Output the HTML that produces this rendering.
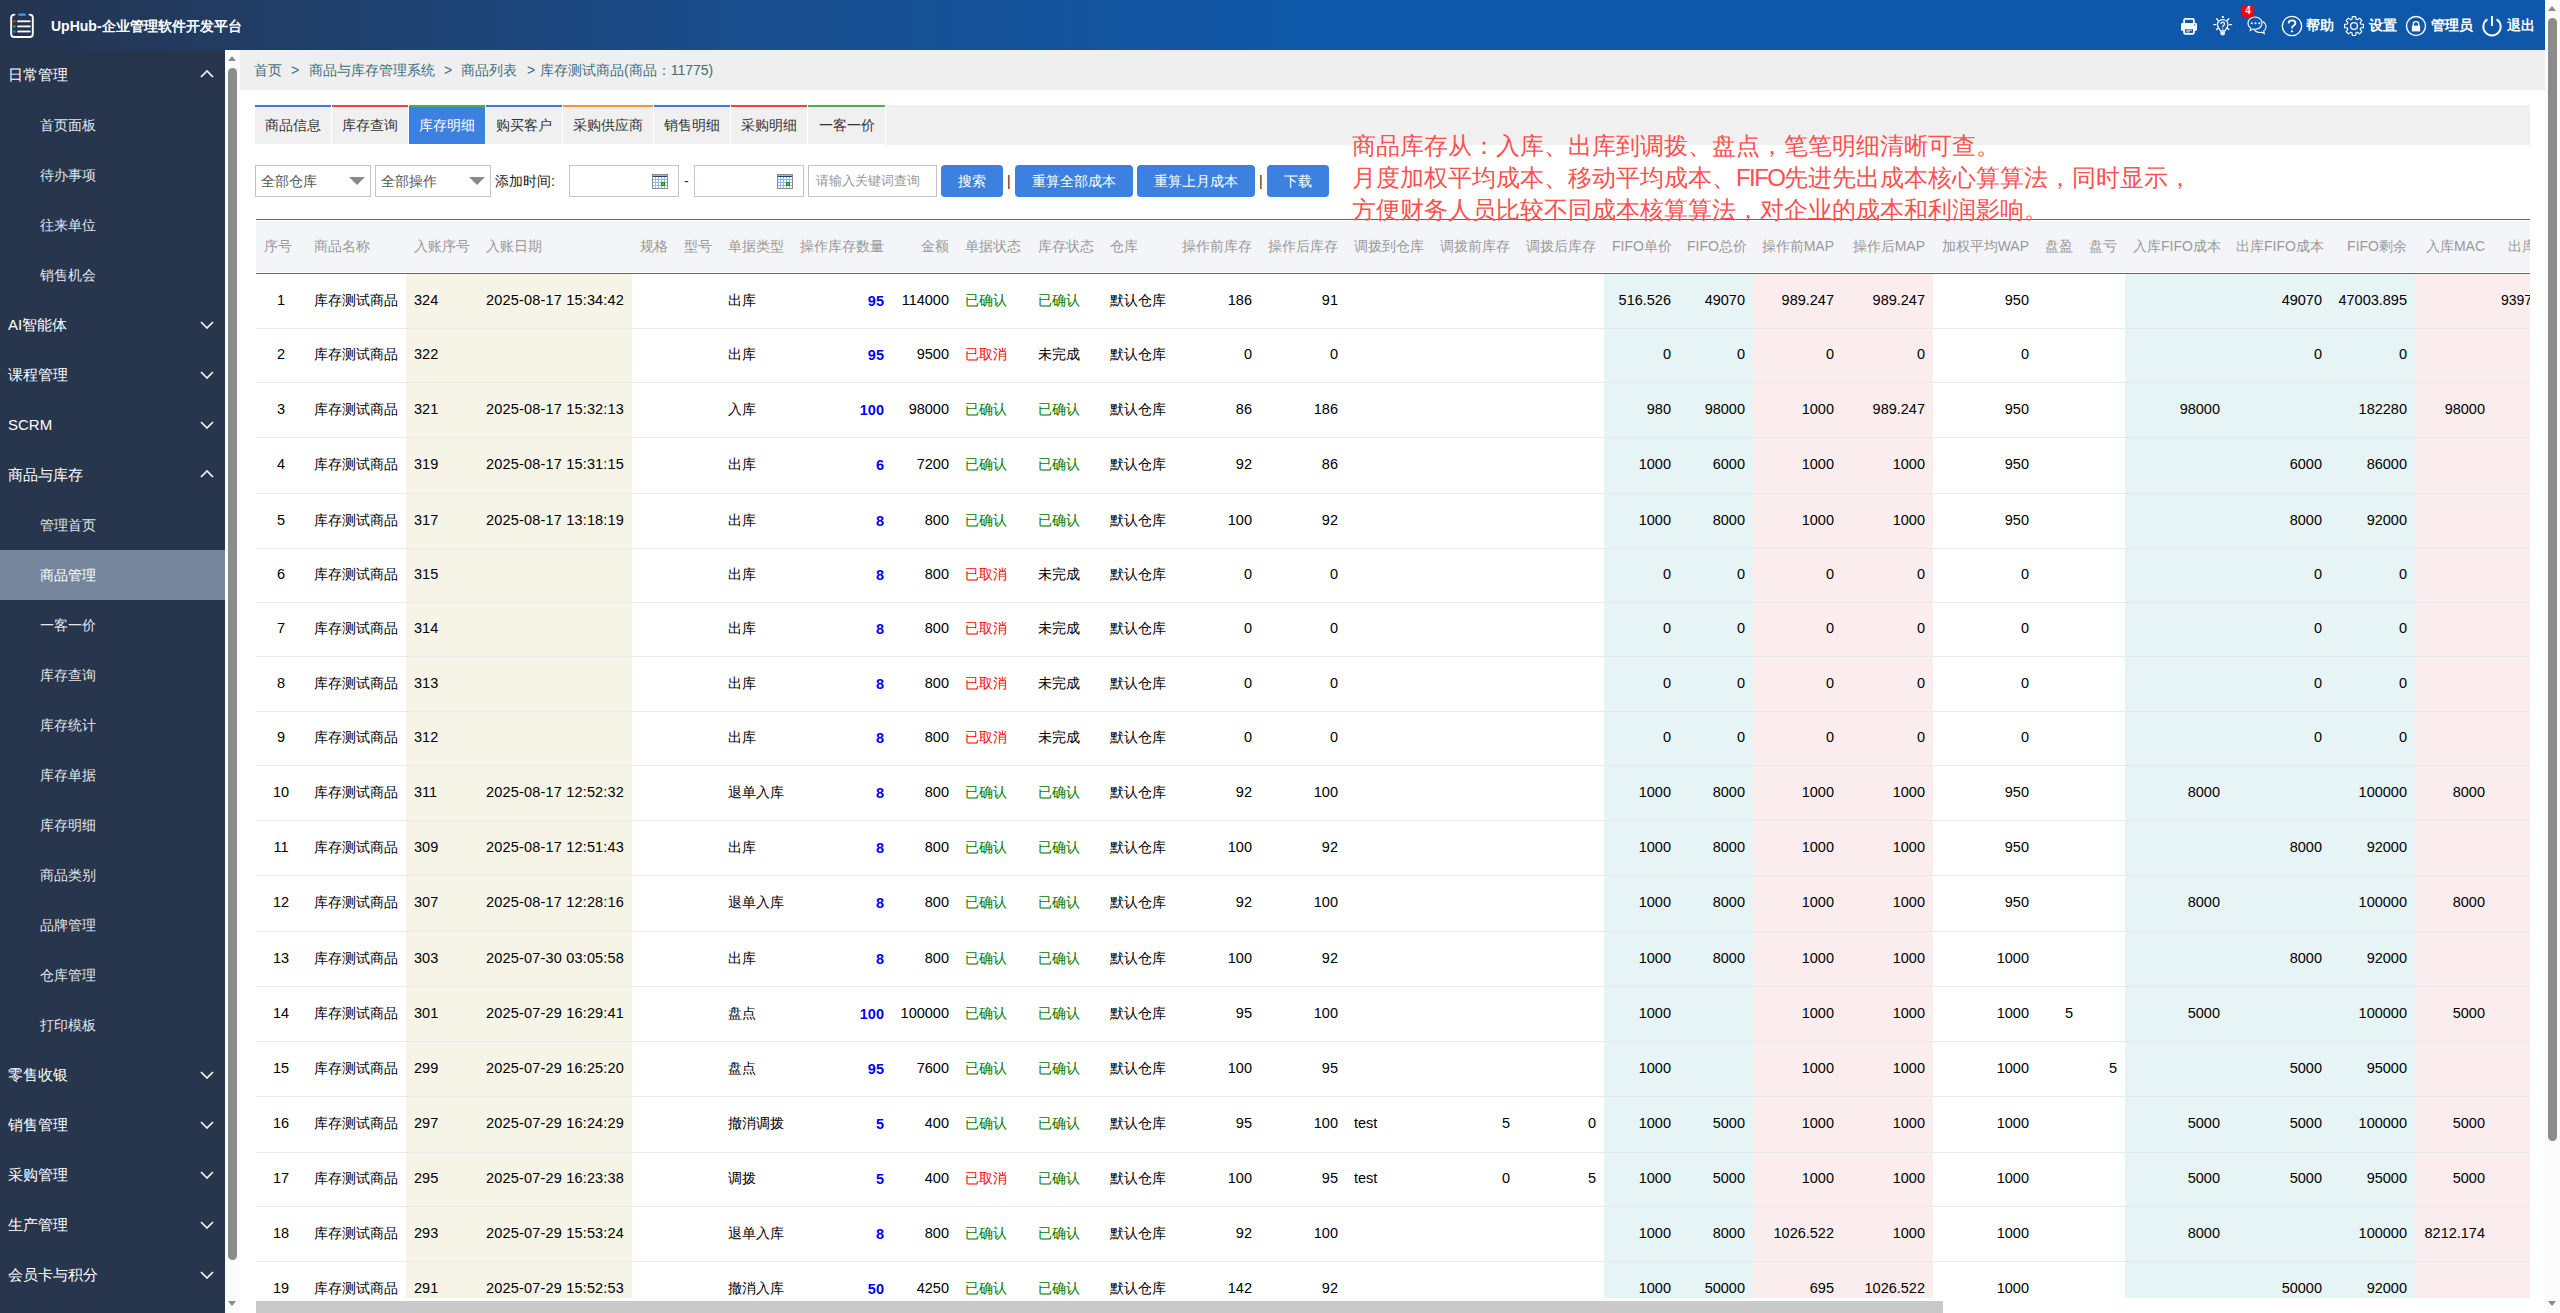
<!DOCTYPE html><html><head><meta charset="utf-8"><style>
*{box-sizing:border-box}
html,body{margin:0;padding:0;width:2560px;height:1313px;overflow:hidden;background:#fff;font-family:"Liberation Sans",sans-serif;font-size:14px;color:#000}
.a{position:absolute}
.hd{left:0;top:0;width:2545px;height:50px;background:linear-gradient(90deg,#25344f 0px,#1a4c8a 700px,#0f57a8 1300px,#0f57a8 2545px)}
.title{left:51px;top:15px;color:#fff;font-weight:bold;font-size:14px;line-height:22px;white-space:nowrap}
.sb{left:0;top:50px;width:225px;height:1263px;background:#27354d}
.mi{position:absolute;left:0;width:225px;height:50px;line-height:50px;white-space:nowrap}
.g{color:#fff;font-size:15px;padding-left:8px}
.s{color:#e3e6ea;font-size:14px;padding-left:40px}
.act{background:#76879d;color:#fff}
.chev{position:absolute;left:200px;width:14px;height:8px}
.vs{background:#fbfbfb}
.thumb{background:#8b8b8b;border-radius:5px}
.bc{left:240px;top:50px;width:2305px;height:40px;background:#efefef;color:#3a6f80;font-size:14px;line-height:40px;padding-left:14px;white-space:nowrap}
.tabbar{left:886px;top:105px;width:1644px;height:40px;background:#f0f0f0}
.tab{position:absolute;top:0;height:39px;line-height:40px;text-align:center;color:#333;font-size:14px;background:#f0f0f0;white-space:nowrap}
.tab.on{background:#3c80e0;color:#fff}
.sel{height:32px;border:1px solid #c4c4c4;background:#fff;color:#555;line-height:30px;padding-left:5px;white-space:nowrap}
.tri{position:absolute;right:5px;top:11px;width:0;height:0;border-left:8px solid transparent;border-right:8px solid transparent;border-top:8px solid #8a8a8a}
.inp{height:32px;border:1px solid #c4c4c4;background:#fff;color:#888;line-height:30px;padding-left:6px;white-space:nowrap}
.btn{height:32px;background:#3c80e0;color:#fff;border-radius:4px;text-align:center;line-height:32px;white-space:nowrap}
.red{left:1352px;color:#ff4f4f;font-size:24px;line-height:32px;white-space:nowrap}
.tbl{left:256px;top:219px;width:2274px;height:1079px;overflow:hidden}
.c{position:absolute;white-space:nowrap;overflow:hidden;padding:0 8px}
.n{font-size:14.5px}
.dt{letter-spacing:0.18px}
.th{color:#999;font-size:14px}
.num{color:#0000ff;font-weight:bold}
.ok{color:#007a00}
.no{color:#f00}

</style></head><body>
<div class="a hd"></div>
<svg class="a" style="left:10px;top:13px" width="25" height="26" viewBox="0 0 25 26">
<path d="M4.5 1.6 Q1.2 1.6 1.2 4.6 V21 Q1.2 24 4.2 24 H19.8 Q22.8 24 22.8 21 V4.6 Q22.8 1.6 19.5 1.6" fill="none" stroke="#fff" stroke-width="1.9" stroke-linecap="round"/>
<rect x="8.3" y="0.6" width="7.6" height="2.2" rx="1.1" fill="#2aa8f2"/>
<circle cx="4.4" cy="8.3" r="1.3" fill="#ff2020"/><circle cx="4.4" cy="13.4" r="1.3" fill="#18b818"/><circle cx="4.4" cy="18.5" r="1.3" fill="#1e78ff"/>
<rect x="7.3" y="7.4" width="13.2" height="1.8" fill="#fff"/><rect x="7.3" y="12.5" width="13.2" height="1.8" fill="#fff"/><rect x="7.3" y="17.6" width="13.2" height="1.8" fill="#fff"/>
</svg>
<div class="a title">UpHub-企业管理软件开发平台</div>
<svg class="a" style="left:2181px;top:17px" width="17" height="18" viewBox="0 0 17 18">
<rect x="3.1" y="1.9" width="9.8" height="5" rx="1.3" fill="none" stroke="#fff" stroke-width="1.8"/>
<rect x="0" y="6" width="16" height="7.8" rx="1.2" fill="#fff"/>
<circle cx="13.6" cy="8" r="0.8" fill="#1a5fb0"/>
<rect x="3.1" y="11" width="9.8" height="5.9" rx="1.3" fill="#0f57a8" stroke="#fff" stroke-width="1.8"/>
<rect x="5" y="12.5" width="6" height="1.2" fill="#c5d6ee"/><rect x="5" y="14.3" width="4" height="1.1" fill="#c5d6ee"/>
</svg>
<svg class="a" style="left:2213px;top:16px" width="20" height="20" viewBox="0 0 20 20">
<path d="M7.3 14.8 C6.8 13.2 4.4 11.5 4.4 8.6 C4.4 5.6 6.8 3.6 9.7 3.6 C12.6 3.6 15 5.6 15 8.6 C15 11.5 12.6 13.2 12.1 14.8 Z" fill="none" stroke="#fff" stroke-width="1.25" stroke-linejoin="round"/>
<path d="M7.9 8.1 Q7.9 6.3 9.7 6.3 Q11.5 6.3 11.5 7.9 Q11.5 9 10.3 9.6 Q9.7 10 9.7 11.3" fill="none" stroke="#dfe8f3" stroke-width="1.4"/>
<rect x="9.1" y="12.2" width="1.2" height="1.2" fill="#dfe8f3"/>
<path d="M7.4 15.2 H12 V17.6 Q12 19.6 9.7 19.6 Q7.4 19.6 7.4 17.6 Z" fill="#e6edf6"/>
<rect x="8.8" y="0" width="2" height="2" fill="#fff"/>
<path d="M3.6 2.8 L5 4.3 M15.8 2.8 L14.4 4.3 M0.8 8.6 H2.8 M16.6 8.6 H18.6 M3.6 13.6 L5 12.3 M15.8 13.6 L14.4 12.3" stroke="#fff" stroke-width="1.3" stroke-linecap="round"/>
</svg>
<svg class="a" style="left:2247px;top:16px" width="21" height="21" viewBox="0 0 21 21">
<path d="M8 1 C4 1 1 3.8 1 7.2 C1 9.3 2.1 11 3.8 12.1 L3.2 14.5 L6.3 13 C6.9 13.2 7.4 13.3 8 13.3 C12 13.3 15 10.6 15 7.2 C15 3.8 12 1 8 1 Z" fill="none" stroke="#fff" stroke-width="1.1"/>
<path d="M15.6 5.6 C17.7 6.7 19 8.6 19 10.8 C19 12.5 18.2 14 16.8 15 L17.3 17.6 L14.6 16.2 C14 16.4 13.3 16.5 12.6 16.5 C10.4 16.5 8.5 15.6 7.4 14.2" fill="none" stroke="#fff" stroke-width="1.1"/>
<circle cx="4.7" cy="7.3" r="1.05" fill="#fff"/><circle cx="8.5" cy="7.3" r="1.05" fill="#fff"/><circle cx="12.3" cy="7.3" r="1.05" fill="#fff"/>
</svg>
<div class="a" style="left:2242px;top:5px;width:12px;height:12px;background:#f00;border-radius:2px;color:#fff;font-size:10px;font-weight:bold;line-height:12px;text-align:center">4</div>
<svg class="a" style="left:2281px;top:15px" width="22" height="22" viewBox="0 0 22 22">
<circle cx="11" cy="11" r="9.7" fill="none" stroke="#fff" stroke-width="1.3"/>
<path d="M7.6 8.6 Q7.6 5.4 11 5.4 Q14.4 5.4 14.4 8.2 Q14.4 9.9 12.3 10.9 Q11 11.5 11 13.4" fill="none" stroke="#fff" stroke-width="1.8"/>
<circle cx="11" cy="16.3" r="1.1" fill="#fff"/>
</svg>
<div class="a" style="left:2306px;top:15px;color:#fff;font-weight:bold;font-size:14px;line-height:20px">帮助</div>
<svg class="a" style="left:2343px;top:15px" width="22" height="22" viewBox="0 0 22 22">
<path d="M8.95 4.31 L9.33 1.55 L12.67 1.55 L13.05 4.31 L14.29 4.82 L16.51 3.14 L18.86 5.49 L17.18 7.71 L17.69 8.95 L20.45 9.33 L20.45 12.67 L17.69 13.05 L17.18 14.29 L18.86 16.51 L16.51 18.86 L14.29 17.18 L13.05 17.69 L12.67 20.45 L9.33 20.45 L8.95 17.69 L7.71 17.18 L5.49 18.86 L3.14 16.51 L4.82 14.29 L4.31 13.05 L1.55 12.67 L1.55 9.33 L4.31 8.95 L4.82 7.71 L3.14 5.49 L5.49 3.14 L7.71 4.82 Z" fill="none" stroke="#fff" stroke-width="1.15" stroke-linejoin="round"/>
<circle cx="11" cy="11" r="3.4" fill="none" stroke="#fff" stroke-width="1.25"/>
</svg>
<div class="a" style="left:2369px;top:15px;color:#fff;font-weight:bold;font-size:14px;line-height:20px">设置</div>
<svg class="a" style="left:2405px;top:15px" width="22" height="22" viewBox="0 0 22 22">
<circle cx="11" cy="11" r="9.5" fill="none" stroke="#fff" stroke-width="1.4"/>
<path d="M8.3 11 V9 Q8.3 6.6 11 6.6 Q13.7 6.6 13.7 9 V11" fill="none" stroke="#fff" stroke-width="1.3"/>
<rect x="6.9" y="10.6" width="8.2" height="5.8" fill="#fff"/>
</svg>
<div class="a" style="left:2431px;top:15px;color:#fff;font-weight:bold;font-size:14px;line-height:20px">管理员</div>
<svg class="a" style="left:2481px;top:15px" width="22" height="22" viewBox="0 0 22 22">
<path d="M6.4 4.4 A8.7 8.7 0 1 0 15.6 4.4" fill="none" stroke="#fff" stroke-width="1.9"/>
<path d="M11 1 V11" stroke="#fff" stroke-width="1.9"/>
</svg>
<div class="a" style="left:2507px;top:15px;color:#fff;font-weight:bold;font-size:14px;line-height:20px">退出</div>
<div class="a vs" style="left:2545px;top:0;width:15px;height:1313px"></div>
<div class="a" style="left:2548px;top:6px;width:0;height:0;border-left:4.5px solid transparent;border-right:4.5px solid transparent;border-bottom:5px solid #8b8b8b"></div>
<div class="a thumb" style="left:2548px;top:18px;width:9px;height:1123px"></div>
<div class="a" style="left:2548px;top:1301px;width:0;height:0;border-left:4.5px solid transparent;border-right:4.5px solid transparent;border-top:5px solid #8b8b8b"></div>
<div class="a sb">
<div class="mi g" style="top:0px">日常管理</div>
<svg class="chev" style="top:20px" viewBox="0 0 14 8"><path d="M1 7 L7 1 L13 7" fill="none" stroke="#fff" stroke-width="1.6"/></svg>
<div class="mi s" style="top:50px">首页面板</div>
<div class="mi s" style="top:100px">待办事项</div>
<div class="mi s" style="top:150px">往来单位</div>
<div class="mi s" style="top:200px">销售机会</div>
<div class="mi g" style="top:250px">AI智能体</div>
<svg class="chev" style="top:271px" viewBox="0 0 14 8"><path d="M1 1 L7 7 L13 1" fill="none" stroke="#fff" stroke-width="1.6"/></svg>
<div class="mi g" style="top:300px">课程管理</div>
<svg class="chev" style="top:321px" viewBox="0 0 14 8"><path d="M1 1 L7 7 L13 1" fill="none" stroke="#fff" stroke-width="1.6"/></svg>
<div class="mi g" style="top:350px">SCRM</div>
<svg class="chev" style="top:371px" viewBox="0 0 14 8"><path d="M1 1 L7 7 L13 1" fill="none" stroke="#fff" stroke-width="1.6"/></svg>
<div class="mi g" style="top:400px">商品与库存</div>
<svg class="chev" style="top:420px" viewBox="0 0 14 8"><path d="M1 7 L7 1 L13 7" fill="none" stroke="#fff" stroke-width="1.6"/></svg>
<div class="mi s" style="top:450px">管理首页</div>
<div class="mi s act" style="top:500px">商品管理</div>
<div class="mi s" style="top:550px">一客一价</div>
<div class="mi s" style="top:600px">库存查询</div>
<div class="mi s" style="top:650px">库存统计</div>
<div class="mi s" style="top:700px">库存单据</div>
<div class="mi s" style="top:750px">库存明细</div>
<div class="mi s" style="top:800px">商品类别</div>
<div class="mi s" style="top:850px">品牌管理</div>
<div class="mi s" style="top:900px">仓库管理</div>
<div class="mi s" style="top:950px">打印模板</div>
<div class="mi g" style="top:1000px">零售收银</div>
<svg class="chev" style="top:1021px" viewBox="0 0 14 8"><path d="M1 1 L7 7 L13 1" fill="none" stroke="#fff" stroke-width="1.6"/></svg>
<div class="mi g" style="top:1050px">销售管理</div>
<svg class="chev" style="top:1071px" viewBox="0 0 14 8"><path d="M1 1 L7 7 L13 1" fill="none" stroke="#fff" stroke-width="1.6"/></svg>
<div class="mi g" style="top:1100px">采购管理</div>
<svg class="chev" style="top:1121px" viewBox="0 0 14 8"><path d="M1 1 L7 7 L13 1" fill="none" stroke="#fff" stroke-width="1.6"/></svg>
<div class="mi g" style="top:1150px">生产管理</div>
<svg class="chev" style="top:1171px" viewBox="0 0 14 8"><path d="M1 1 L7 7 L13 1" fill="none" stroke="#fff" stroke-width="1.6"/></svg>
<div class="mi g" style="top:1200px">会员卡与积分</div>
<svg class="chev" style="top:1221px" viewBox="0 0 14 8"><path d="M1 1 L7 7 L13 1" fill="none" stroke="#fff" stroke-width="1.6"/></svg>
</div>
<div class="a vs" style="left:225px;top:50px;width:15px;height:1263px"></div>
<div class="a" style="left:228px;top:56px;width:0;height:0;border-left:4.5px solid transparent;border-right:4.5px solid transparent;border-bottom:5px solid #8b8b8b"></div>
<div class="a thumb" style="left:228px;top:68px;width:9px;height:1192px"></div>
<div class="a" style="left:228px;top:1301px;width:0;height:0;border-left:4.5px solid transparent;border-right:4.5px solid transparent;border-top:5px solid #8b8b8b"></div>
<div class="a bc"></div>
<div class="a" style="left:254px;top:50px;line-height:40px;color:#3a6f80;white-space:nowrap">首页</div>
<div class="a" style="left:291px;top:50px;line-height:40px;color:#3a6f80;white-space:nowrap">&gt;</div>
<div class="a" style="left:309px;top:50px;line-height:40px;color:#3a6f80;white-space:nowrap">商品与库存管理系统</div>
<div class="a" style="left:444px;top:50px;line-height:40px;color:#3a6f80;white-space:nowrap">&gt;</div>
<div class="a" style="left:461px;top:50px;line-height:40px;color:#3a6f80;white-space:nowrap">商品列表</div>
<div class="a" style="left:527px;top:50px;line-height:40px;color:#3a6f80;white-space:nowrap">&gt;</div>
<div class="a" style="left:540px;top:50px;line-height:40px;color:#3a6f80;white-space:nowrap">库存测试商品(商品：11775)</div>
<div class="a tabbar"></div>
<div class="a tab" style="left:255px;top:105px;width:76px;height:39px;border-top:2px solid #3a7bd5;line-height:36px">商品信息</div>
<div class="a tab" style="left:332px;top:105px;width:76px;height:39px;border-top:2px solid #e04a3f;line-height:36px">库存查询</div>
<div class="a tab on" style="left:409px;top:105px;width:76px;height:39px;border-top:2px solid #4cae4c;line-height:36px">库存明细</div>
<div class="a tab" style="left:486px;top:105px;width:76px;height:39px;border-top:2px solid #3a7bd5;line-height:36px">购买客户</div>
<div class="a tab" style="left:563px;top:105px;width:90px;height:39px;border-top:2px solid #f0953a;line-height:36px">采购供应商</div>
<div class="a tab" style="left:654px;top:105px;width:76px;height:39px;border-top:2px solid #3a7bd5;line-height:36px">销售明细</div>
<div class="a tab" style="left:731px;top:105px;width:76px;height:39px;border-top:2px solid #e04a3f;line-height:36px">采购明细</div>
<div class="a tab" style="left:808px;top:105px;width:77px;height:39px;border-top:2px solid #4cae4c;line-height:36px">一客一价</div>
<div class="a sel" style="left:255px;top:165px;width:116px">全部仓库<span class="tri"></span></div>
<div class="a sel" style="left:375px;top:165px;width:116px">全部操作<span class="tri"></span></div>
<div class="a" style="left:495px;top:165px;line-height:32px;color:#222;white-space:nowrap">添加时间:</div>
<div class="a inp" style="left:569px;top:165px;width:110px"><svg class="a" style="right:10px;top:8px" width="16" height="15" viewBox="0 0 16 15" shape-rendering="crispEdges"><rect x="0" y="0" width="16" height="15" fill="#8a8a8a"/><rect x="1" y="1" width="14" height="1" fill="#b4b4b4"/><rect x="1" y="2" width="14" height="1" fill="#1d3f73"/><rect x="1" y="3" width="14" height="11" fill="#94bbef"/><rect x="1" y="3" width="2" height="2" fill="#fff"/><rect x="1" y="6" width="2" height="2" fill="#fff"/><rect x="1" y="9" width="2" height="2" fill="#fff"/><rect x="1" y="12" width="2" height="2" fill="#fff"/><rect x="4" y="3" width="2" height="2" fill="#fff"/><rect x="4" y="6" width="2" height="2" fill="#fff"/><rect x="4" y="9" width="2" height="2" fill="#fff"/><rect x="4" y="12" width="2" height="2" fill="#fff"/><rect x="7" y="3" width="2" height="2" fill="#fff"/><rect x="7" y="6" width="2" height="2" fill="#fff"/><rect x="7" y="9" width="2" height="2" fill="#fff"/><rect x="7" y="12" width="2" height="2" fill="#fff"/><rect x="10" y="3" width="2" height="2" fill="#fff"/><rect x="10" y="6" width="2" height="2" fill="#fff"/><rect x="10" y="9" width="2" height="2" fill="#fff"/><rect x="10" y="12" width="2" height="2" fill="#fff"/><rect x="13" y="3" width="2" height="2" fill="#fff"/><rect x="13" y="6" width="2" height="2" fill="#fff"/><rect x="13" y="9" width="2" height="2" fill="#fff"/><rect x="13" y="12" width="2" height="2" fill="#fff"/><rect x="9" y="8" width="4" height="4" fill="#1a8f1a"/><rect x="10" y="9" width="2" height="2" fill="#3ed13e"/></svg></div>
<div class="a" style="left:684px;top:165px;line-height:32px;color:#333">-</div>
<div class="a inp" style="left:694px;top:165px;width:110px"><svg class="a" style="right:10px;top:8px" width="16" height="15" viewBox="0 0 16 15" shape-rendering="crispEdges"><rect x="0" y="0" width="16" height="15" fill="#8a8a8a"/><rect x="1" y="1" width="14" height="1" fill="#b4b4b4"/><rect x="1" y="2" width="14" height="1" fill="#1d3f73"/><rect x="1" y="3" width="14" height="11" fill="#94bbef"/><rect x="1" y="3" width="2" height="2" fill="#fff"/><rect x="1" y="6" width="2" height="2" fill="#fff"/><rect x="1" y="9" width="2" height="2" fill="#fff"/><rect x="1" y="12" width="2" height="2" fill="#fff"/><rect x="4" y="3" width="2" height="2" fill="#fff"/><rect x="4" y="6" width="2" height="2" fill="#fff"/><rect x="4" y="9" width="2" height="2" fill="#fff"/><rect x="4" y="12" width="2" height="2" fill="#fff"/><rect x="7" y="3" width="2" height="2" fill="#fff"/><rect x="7" y="6" width="2" height="2" fill="#fff"/><rect x="7" y="9" width="2" height="2" fill="#fff"/><rect x="7" y="12" width="2" height="2" fill="#fff"/><rect x="10" y="3" width="2" height="2" fill="#fff"/><rect x="10" y="6" width="2" height="2" fill="#fff"/><rect x="10" y="9" width="2" height="2" fill="#fff"/><rect x="10" y="12" width="2" height="2" fill="#fff"/><rect x="13" y="3" width="2" height="2" fill="#fff"/><rect x="13" y="6" width="2" height="2" fill="#fff"/><rect x="13" y="9" width="2" height="2" fill="#fff"/><rect x="13" y="12" width="2" height="2" fill="#fff"/><rect x="9" y="8" width="4" height="4" fill="#1a8f1a"/><rect x="10" y="9" width="2" height="2" fill="#3ed13e"/></svg></div>
<div class="a inp" style="left:808px;top:165px;width:129px;color:#999;font-size:13px;padding-left:7px">请输入关键词查询</div>
<div class="a btn" style="left:941px;top:165px;width:62px">搜索</div>
<div class="a" style="left:1007px;top:165px;line-height:32px;color:#222">|</div>
<div class="a btn" style="left:1015px;top:165px;width:118px">重算全部成本</div>
<div class="a btn" style="left:1137px;top:165px;width:118px">重算上月成本</div>
<div class="a" style="left:1259px;top:165px;line-height:32px;color:#222">|</div>
<div class="a btn" style="left:1267px;top:165px;width:62px">下载</div>
<div class="a tbl">
<div class="a" style="left:0;top:0;width:2274px;height:1px;background:#666"></div>
<div class="a" style="left:0;top:2px;width:2274px;height:51px;background:#f4f5f9"></div>
<div class="a" style="left:0;top:54px;width:2274px;height:1px;background:#666"></div>
<div class="a" style="left:150px;top:55px;width:72px;height:1024px;background:#f6f4e7"></div>
<div class="a" style="left:222px;top:55px;width:154px;height:1024px;background:#f6f4e7"></div>
<div class="a" style="left:1348px;top:55px;width:75px;height:1024px;background:#e6f4f5"></div>
<div class="a" style="left:1423px;top:55px;width:74px;height:1024px;background:#e6f4f5"></div>
<div class="a" style="left:1497px;top:55px;width:89px;height:1024px;background:#fbeced"></div>
<div class="a" style="left:1586px;top:55px;width:91px;height:1024px;background:#fbeced"></div>
<div class="a" style="left:1869px;top:55px;width:103px;height:1024px;background:#e6f4f5"></div>
<div class="a" style="left:1972px;top:55px;width:102px;height:1024px;background:#e6f4f5"></div>
<div class="a" style="left:2074px;top:55px;width:85px;height:1024px;background:#e6f4f5"></div>
<div class="a" style="left:2159px;top:55px;width:78px;height:1024px;background:#fbeced"></div>
<div class="a" style="left:2237px;top:55px;width:100px;height:1024px;background:#fbeced"></div>
<div class="a" style="left:0;top:109px;width:2274px;height:1px;background:#e8e9ec"></div>
<div class="a" style="left:0;top:163px;width:2274px;height:1px;background:#e8e9ec"></div>
<div class="a" style="left:0;top:218px;width:2274px;height:1px;background:#e8e9ec"></div>
<div class="a" style="left:0;top:274px;width:2274px;height:1px;background:#e8e9ec"></div>
<div class="a" style="left:0;top:329px;width:2274px;height:1px;background:#e8e9ec"></div>
<div class="a" style="left:0;top:383px;width:2274px;height:1px;background:#e8e9ec"></div>
<div class="a" style="left:0;top:437px;width:2274px;height:1px;background:#e8e9ec"></div>
<div class="a" style="left:0;top:492px;width:2274px;height:1px;background:#e8e9ec"></div>
<div class="a" style="left:0;top:546px;width:2274px;height:1px;background:#e8e9ec"></div>
<div class="a" style="left:0;top:601px;width:2274px;height:1px;background:#e8e9ec"></div>
<div class="a" style="left:0;top:656px;width:2274px;height:1px;background:#e8e9ec"></div>
<div class="a" style="left:0;top:712px;width:2274px;height:1px;background:#e8e9ec"></div>
<div class="a" style="left:0;top:767px;width:2274px;height:1px;background:#e8e9ec"></div>
<div class="a" style="left:0;top:822px;width:2274px;height:1px;background:#e8e9ec"></div>
<div class="a" style="left:0;top:877px;width:2274px;height:1px;background:#e8e9ec"></div>
<div class="a" style="left:0;top:933px;width:2274px;height:1px;background:#e8e9ec"></div>
<div class="a" style="left:0;top:987px;width:2274px;height:1px;background:#e8e9ec"></div>
<div class="a" style="left:0;top:1042px;width:2274px;height:1px;background:#e8e9ec"></div>
<div class="c th" style="left:0px;top:2px;width:50px;height:51px;line-height:51px;text-align:left;">序号</div>
<div class="c th" style="left:50px;top:2px;width:100px;height:51px;line-height:51px;text-align:left;">商品名称</div>
<div class="c th" style="left:150px;top:2px;width:72px;height:51px;line-height:51px;text-align:left;">入账序号</div>
<div class="c th" style="left:222px;top:2px;width:154px;height:51px;line-height:51px;text-align:left;">入账日期</div>
<div class="c th" style="left:376px;top:2px;width:44px;height:51px;line-height:51px;text-align:left;">规格</div>
<div class="c th" style="left:420px;top:2px;width:44px;height:51px;line-height:51px;text-align:left;">型号</div>
<div class="c th" style="left:464px;top:2px;width:72px;height:51px;line-height:51px;text-align:left;">单据类型</div>
<div class="c th" style="left:536px;top:2px;width:100px;height:51px;line-height:51px;text-align:right;">操作库存数量</div>
<div class="c th" style="left:636px;top:2px;width:65px;height:51px;line-height:51px;text-align:right;">金额</div>
<div class="c th" style="left:701px;top:2px;width:73px;height:51px;line-height:51px;text-align:left;">单据状态</div>
<div class="c th" style="left:774px;top:2px;width:72px;height:51px;line-height:51px;text-align:left;">库存状态</div>
<div class="c th" style="left:846px;top:2px;width:72px;height:51px;line-height:51px;text-align:left;">仓库</div>
<div class="c th" style="left:918px;top:2px;width:86px;height:51px;line-height:51px;text-align:right;">操作前库存</div>
<div class="c th" style="left:1004px;top:2px;width:86px;height:51px;line-height:51px;text-align:right;">操作后库存</div>
<div class="c th" style="left:1090px;top:2px;width:86px;height:51px;line-height:51px;text-align:left;">调拨到仓库</div>
<div class="c th" style="left:1176px;top:2px;width:86px;height:51px;line-height:51px;text-align:right;">调拨前库存</div>
<div class="c th" style="left:1262px;top:2px;width:86px;height:51px;line-height:51px;text-align:right;">调拨后库存</div>
<div class="c th" style="left:1348px;top:2px;width:75px;height:51px;line-height:51px;text-align:right;">FIFO单价</div>
<div class="c th" style="left:1423px;top:2px;width:74px;height:51px;line-height:51px;text-align:right;">FIFO总价</div>
<div class="c th" style="left:1497px;top:2px;width:89px;height:51px;line-height:51px;text-align:right;">操作前MAP</div>
<div class="c th" style="left:1586px;top:2px;width:91px;height:51px;line-height:51px;text-align:right;">操作后MAP</div>
<div class="c th" style="left:1677px;top:2px;width:104px;height:51px;line-height:51px;text-align:right;">加权平均WAP</div>
<div class="c th" style="left:1781px;top:2px;width:44px;height:51px;line-height:51px;text-align:right;">盘盈</div>
<div class="c th" style="left:1825px;top:2px;width:44px;height:51px;line-height:51px;text-align:right;">盘亏</div>
<div class="c th" style="left:1869px;top:2px;width:103px;height:51px;line-height:51px;text-align:right;">入库FIFO成本</div>
<div class="c th" style="left:1972px;top:2px;width:102px;height:51px;line-height:51px;text-align:right;">出库FIFO成本</div>
<div class="c th" style="left:2074px;top:2px;width:85px;height:51px;line-height:51px;text-align:right;">FIFO剩余</div>
<div class="c th" style="left:2159px;top:2px;width:78px;height:51px;line-height:51px;text-align:right;">入库MAC</div>
<div class="c th" style="left:2237px;top:2px;width:100px;height:51px;line-height:51px;text-align:left;padding-left:15px;">出库MAC</div>
<div class="c n" style="left:0px;top:54px;width:50px;height:54px;line-height:54px;text-align:center">1</div>
<div class="c" style="left:50px;top:54px;width:100px;height:54px;line-height:54px;text-align:left">库存测试商品</div>
<div class="c n" style="left:150px;top:54px;width:72px;height:54px;line-height:54px;text-align:left">324</div>
<div class="c n dt" style="left:222px;top:54px;width:154px;height:54px;line-height:54px;text-align:left">2025-08-17 15:34:42</div>
<div class="c" style="left:464px;top:54px;width:72px;height:54px;line-height:54px;text-align:left">出库</div>
<div class="c num n" style="left:536px;top:55px;width:100px;height:54px;line-height:54px;text-align:right">95</div>
<div class="c n" style="left:636px;top:54px;width:65px;height:54px;line-height:54px;text-align:right">114000</div>
<div class="c ok" style="left:701px;top:54px;width:73px;height:54px;line-height:54px;text-align:left">已确认</div>
<div class="c ok" style="left:774px;top:54px;width:72px;height:54px;line-height:54px;text-align:left">已确认</div>
<div class="c" style="left:846px;top:54px;width:72px;height:54px;line-height:54px;text-align:left">默认仓库</div>
<div class="c n" style="left:918px;top:54px;width:86px;height:54px;line-height:54px;text-align:right">186</div>
<div class="c n" style="left:1004px;top:54px;width:86px;height:54px;line-height:54px;text-align:right">91</div>
<div class="c n" style="left:1348px;top:54px;width:75px;height:54px;line-height:54px;text-align:right">516.526</div>
<div class="c n" style="left:1423px;top:54px;width:74px;height:54px;line-height:54px;text-align:right">49070</div>
<div class="c n" style="left:1497px;top:54px;width:89px;height:54px;line-height:54px;text-align:right">989.247</div>
<div class="c n" style="left:1586px;top:54px;width:91px;height:54px;line-height:54px;text-align:right">989.247</div>
<div class="c n" style="left:1677px;top:54px;width:104px;height:54px;line-height:54px;text-align:right">950</div>
<div class="c n" style="left:1972px;top:54px;width:102px;height:54px;line-height:54px;text-align:right">49070</div>
<div class="c n" style="left:2074px;top:54px;width:85px;height:54px;line-height:54px;text-align:right">47003.895</div>
<div class="c" style="left:2237px;top:54px;width:100px;height:54px;line-height:54px;text-align:left">9397.xxx</div>
<div class="c n" style="left:0px;top:109px;width:50px;height:53px;line-height:53px;text-align:center">2</div>
<div class="c" style="left:50px;top:109px;width:100px;height:53px;line-height:53px;text-align:left">库存测试商品</div>
<div class="c n" style="left:150px;top:109px;width:72px;height:53px;line-height:53px;text-align:left">322</div>
<div class="c" style="left:464px;top:109px;width:72px;height:53px;line-height:53px;text-align:left">出库</div>
<div class="c num n" style="left:536px;top:110px;width:100px;height:53px;line-height:53px;text-align:right">95</div>
<div class="c n" style="left:636px;top:109px;width:65px;height:53px;line-height:53px;text-align:right">9500</div>
<div class="c no" style="left:701px;top:109px;width:73px;height:53px;line-height:53px;text-align:left">已取消</div>
<div class="c" style="left:774px;top:109px;width:72px;height:53px;line-height:53px;text-align:left">未完成</div>
<div class="c" style="left:846px;top:109px;width:72px;height:53px;line-height:53px;text-align:left">默认仓库</div>
<div class="c n" style="left:918px;top:109px;width:86px;height:53px;line-height:53px;text-align:right">0</div>
<div class="c n" style="left:1004px;top:109px;width:86px;height:53px;line-height:53px;text-align:right">0</div>
<div class="c n" style="left:1348px;top:109px;width:75px;height:53px;line-height:53px;text-align:right">0</div>
<div class="c n" style="left:1423px;top:109px;width:74px;height:53px;line-height:53px;text-align:right">0</div>
<div class="c n" style="left:1497px;top:109px;width:89px;height:53px;line-height:53px;text-align:right">0</div>
<div class="c n" style="left:1586px;top:109px;width:91px;height:53px;line-height:53px;text-align:right">0</div>
<div class="c n" style="left:1677px;top:109px;width:104px;height:53px;line-height:53px;text-align:right">0</div>
<div class="c n" style="left:1972px;top:109px;width:102px;height:53px;line-height:53px;text-align:right">0</div>
<div class="c n" style="left:2074px;top:109px;width:85px;height:53px;line-height:53px;text-align:right">0</div>
<div class="c n" style="left:0px;top:163px;width:50px;height:54px;line-height:54px;text-align:center">3</div>
<div class="c" style="left:50px;top:163px;width:100px;height:54px;line-height:54px;text-align:left">库存测试商品</div>
<div class="c n" style="left:150px;top:163px;width:72px;height:54px;line-height:54px;text-align:left">321</div>
<div class="c n dt" style="left:222px;top:163px;width:154px;height:54px;line-height:54px;text-align:left">2025-08-17 15:32:13</div>
<div class="c" style="left:464px;top:163px;width:72px;height:54px;line-height:54px;text-align:left">入库</div>
<div class="c num n" style="left:536px;top:164px;width:100px;height:54px;line-height:54px;text-align:right">100</div>
<div class="c n" style="left:636px;top:163px;width:65px;height:54px;line-height:54px;text-align:right">98000</div>
<div class="c ok" style="left:701px;top:163px;width:73px;height:54px;line-height:54px;text-align:left">已确认</div>
<div class="c ok" style="left:774px;top:163px;width:72px;height:54px;line-height:54px;text-align:left">已确认</div>
<div class="c" style="left:846px;top:163px;width:72px;height:54px;line-height:54px;text-align:left">默认仓库</div>
<div class="c n" style="left:918px;top:163px;width:86px;height:54px;line-height:54px;text-align:right">86</div>
<div class="c n" style="left:1004px;top:163px;width:86px;height:54px;line-height:54px;text-align:right">186</div>
<div class="c n" style="left:1348px;top:163px;width:75px;height:54px;line-height:54px;text-align:right">980</div>
<div class="c n" style="left:1423px;top:163px;width:74px;height:54px;line-height:54px;text-align:right">98000</div>
<div class="c n" style="left:1497px;top:163px;width:89px;height:54px;line-height:54px;text-align:right">1000</div>
<div class="c n" style="left:1586px;top:163px;width:91px;height:54px;line-height:54px;text-align:right">989.247</div>
<div class="c n" style="left:1677px;top:163px;width:104px;height:54px;line-height:54px;text-align:right">950</div>
<div class="c n" style="left:1869px;top:163px;width:103px;height:54px;line-height:54px;text-align:right">98000</div>
<div class="c n" style="left:2074px;top:163px;width:85px;height:54px;line-height:54px;text-align:right">182280</div>
<div class="c n" style="left:2159px;top:163px;width:78px;height:54px;line-height:54px;text-align:right">98000</div>
<div class="c n" style="left:0px;top:218px;width:50px;height:55px;line-height:55px;text-align:center">4</div>
<div class="c" style="left:50px;top:218px;width:100px;height:55px;line-height:55px;text-align:left">库存测试商品</div>
<div class="c n" style="left:150px;top:218px;width:72px;height:55px;line-height:55px;text-align:left">319</div>
<div class="c n dt" style="left:222px;top:218px;width:154px;height:55px;line-height:55px;text-align:left">2025-08-17 15:31:15</div>
<div class="c" style="left:464px;top:218px;width:72px;height:55px;line-height:55px;text-align:left">出库</div>
<div class="c num n" style="left:536px;top:219px;width:100px;height:55px;line-height:55px;text-align:right">6</div>
<div class="c n" style="left:636px;top:218px;width:65px;height:55px;line-height:55px;text-align:right">7200</div>
<div class="c ok" style="left:701px;top:218px;width:73px;height:55px;line-height:55px;text-align:left">已确认</div>
<div class="c ok" style="left:774px;top:218px;width:72px;height:55px;line-height:55px;text-align:left">已确认</div>
<div class="c" style="left:846px;top:218px;width:72px;height:55px;line-height:55px;text-align:left">默认仓库</div>
<div class="c n" style="left:918px;top:218px;width:86px;height:55px;line-height:55px;text-align:right">92</div>
<div class="c n" style="left:1004px;top:218px;width:86px;height:55px;line-height:55px;text-align:right">86</div>
<div class="c n" style="left:1348px;top:218px;width:75px;height:55px;line-height:55px;text-align:right">1000</div>
<div class="c n" style="left:1423px;top:218px;width:74px;height:55px;line-height:55px;text-align:right">6000</div>
<div class="c n" style="left:1497px;top:218px;width:89px;height:55px;line-height:55px;text-align:right">1000</div>
<div class="c n" style="left:1586px;top:218px;width:91px;height:55px;line-height:55px;text-align:right">1000</div>
<div class="c n" style="left:1677px;top:218px;width:104px;height:55px;line-height:55px;text-align:right">950</div>
<div class="c n" style="left:1972px;top:218px;width:102px;height:55px;line-height:55px;text-align:right">6000</div>
<div class="c n" style="left:2074px;top:218px;width:85px;height:55px;line-height:55px;text-align:right">86000</div>
<div class="c n" style="left:0px;top:274px;width:50px;height:54px;line-height:54px;text-align:center">5</div>
<div class="c" style="left:50px;top:274px;width:100px;height:54px;line-height:54px;text-align:left">库存测试商品</div>
<div class="c n" style="left:150px;top:274px;width:72px;height:54px;line-height:54px;text-align:left">317</div>
<div class="c n dt" style="left:222px;top:274px;width:154px;height:54px;line-height:54px;text-align:left">2025-08-17 13:18:19</div>
<div class="c" style="left:464px;top:274px;width:72px;height:54px;line-height:54px;text-align:left">出库</div>
<div class="c num n" style="left:536px;top:275px;width:100px;height:54px;line-height:54px;text-align:right">8</div>
<div class="c n" style="left:636px;top:274px;width:65px;height:54px;line-height:54px;text-align:right">800</div>
<div class="c ok" style="left:701px;top:274px;width:73px;height:54px;line-height:54px;text-align:left">已确认</div>
<div class="c ok" style="left:774px;top:274px;width:72px;height:54px;line-height:54px;text-align:left">已确认</div>
<div class="c" style="left:846px;top:274px;width:72px;height:54px;line-height:54px;text-align:left">默认仓库</div>
<div class="c n" style="left:918px;top:274px;width:86px;height:54px;line-height:54px;text-align:right">100</div>
<div class="c n" style="left:1004px;top:274px;width:86px;height:54px;line-height:54px;text-align:right">92</div>
<div class="c n" style="left:1348px;top:274px;width:75px;height:54px;line-height:54px;text-align:right">1000</div>
<div class="c n" style="left:1423px;top:274px;width:74px;height:54px;line-height:54px;text-align:right">8000</div>
<div class="c n" style="left:1497px;top:274px;width:89px;height:54px;line-height:54px;text-align:right">1000</div>
<div class="c n" style="left:1586px;top:274px;width:91px;height:54px;line-height:54px;text-align:right">1000</div>
<div class="c n" style="left:1677px;top:274px;width:104px;height:54px;line-height:54px;text-align:right">950</div>
<div class="c n" style="left:1972px;top:274px;width:102px;height:54px;line-height:54px;text-align:right">8000</div>
<div class="c n" style="left:2074px;top:274px;width:85px;height:54px;line-height:54px;text-align:right">92000</div>
<div class="c n" style="left:0px;top:329px;width:50px;height:53px;line-height:53px;text-align:center">6</div>
<div class="c" style="left:50px;top:329px;width:100px;height:53px;line-height:53px;text-align:left">库存测试商品</div>
<div class="c n" style="left:150px;top:329px;width:72px;height:53px;line-height:53px;text-align:left">315</div>
<div class="c" style="left:464px;top:329px;width:72px;height:53px;line-height:53px;text-align:left">出库</div>
<div class="c num n" style="left:536px;top:330px;width:100px;height:53px;line-height:53px;text-align:right">8</div>
<div class="c n" style="left:636px;top:329px;width:65px;height:53px;line-height:53px;text-align:right">800</div>
<div class="c no" style="left:701px;top:329px;width:73px;height:53px;line-height:53px;text-align:left">已取消</div>
<div class="c" style="left:774px;top:329px;width:72px;height:53px;line-height:53px;text-align:left">未完成</div>
<div class="c" style="left:846px;top:329px;width:72px;height:53px;line-height:53px;text-align:left">默认仓库</div>
<div class="c n" style="left:918px;top:329px;width:86px;height:53px;line-height:53px;text-align:right">0</div>
<div class="c n" style="left:1004px;top:329px;width:86px;height:53px;line-height:53px;text-align:right">0</div>
<div class="c n" style="left:1348px;top:329px;width:75px;height:53px;line-height:53px;text-align:right">0</div>
<div class="c n" style="left:1423px;top:329px;width:74px;height:53px;line-height:53px;text-align:right">0</div>
<div class="c n" style="left:1497px;top:329px;width:89px;height:53px;line-height:53px;text-align:right">0</div>
<div class="c n" style="left:1586px;top:329px;width:91px;height:53px;line-height:53px;text-align:right">0</div>
<div class="c n" style="left:1677px;top:329px;width:104px;height:53px;line-height:53px;text-align:right">0</div>
<div class="c n" style="left:1972px;top:329px;width:102px;height:53px;line-height:53px;text-align:right">0</div>
<div class="c n" style="left:2074px;top:329px;width:85px;height:53px;line-height:53px;text-align:right">0</div>
<div class="c n" style="left:0px;top:383px;width:50px;height:53px;line-height:53px;text-align:center">7</div>
<div class="c" style="left:50px;top:383px;width:100px;height:53px;line-height:53px;text-align:left">库存测试商品</div>
<div class="c n" style="left:150px;top:383px;width:72px;height:53px;line-height:53px;text-align:left">314</div>
<div class="c" style="left:464px;top:383px;width:72px;height:53px;line-height:53px;text-align:left">出库</div>
<div class="c num n" style="left:536px;top:384px;width:100px;height:53px;line-height:53px;text-align:right">8</div>
<div class="c n" style="left:636px;top:383px;width:65px;height:53px;line-height:53px;text-align:right">800</div>
<div class="c no" style="left:701px;top:383px;width:73px;height:53px;line-height:53px;text-align:left">已取消</div>
<div class="c" style="left:774px;top:383px;width:72px;height:53px;line-height:53px;text-align:left">未完成</div>
<div class="c" style="left:846px;top:383px;width:72px;height:53px;line-height:53px;text-align:left">默认仓库</div>
<div class="c n" style="left:918px;top:383px;width:86px;height:53px;line-height:53px;text-align:right">0</div>
<div class="c n" style="left:1004px;top:383px;width:86px;height:53px;line-height:53px;text-align:right">0</div>
<div class="c n" style="left:1348px;top:383px;width:75px;height:53px;line-height:53px;text-align:right">0</div>
<div class="c n" style="left:1423px;top:383px;width:74px;height:53px;line-height:53px;text-align:right">0</div>
<div class="c n" style="left:1497px;top:383px;width:89px;height:53px;line-height:53px;text-align:right">0</div>
<div class="c n" style="left:1586px;top:383px;width:91px;height:53px;line-height:53px;text-align:right">0</div>
<div class="c n" style="left:1677px;top:383px;width:104px;height:53px;line-height:53px;text-align:right">0</div>
<div class="c n" style="left:1972px;top:383px;width:102px;height:53px;line-height:53px;text-align:right">0</div>
<div class="c n" style="left:2074px;top:383px;width:85px;height:53px;line-height:53px;text-align:right">0</div>
<div class="c n" style="left:0px;top:437px;width:50px;height:54px;line-height:54px;text-align:center">8</div>
<div class="c" style="left:50px;top:437px;width:100px;height:54px;line-height:54px;text-align:left">库存测试商品</div>
<div class="c n" style="left:150px;top:437px;width:72px;height:54px;line-height:54px;text-align:left">313</div>
<div class="c" style="left:464px;top:437px;width:72px;height:54px;line-height:54px;text-align:left">出库</div>
<div class="c num n" style="left:536px;top:438px;width:100px;height:54px;line-height:54px;text-align:right">8</div>
<div class="c n" style="left:636px;top:437px;width:65px;height:54px;line-height:54px;text-align:right">800</div>
<div class="c no" style="left:701px;top:437px;width:73px;height:54px;line-height:54px;text-align:left">已取消</div>
<div class="c" style="left:774px;top:437px;width:72px;height:54px;line-height:54px;text-align:left">未完成</div>
<div class="c" style="left:846px;top:437px;width:72px;height:54px;line-height:54px;text-align:left">默认仓库</div>
<div class="c n" style="left:918px;top:437px;width:86px;height:54px;line-height:54px;text-align:right">0</div>
<div class="c n" style="left:1004px;top:437px;width:86px;height:54px;line-height:54px;text-align:right">0</div>
<div class="c n" style="left:1348px;top:437px;width:75px;height:54px;line-height:54px;text-align:right">0</div>
<div class="c n" style="left:1423px;top:437px;width:74px;height:54px;line-height:54px;text-align:right">0</div>
<div class="c n" style="left:1497px;top:437px;width:89px;height:54px;line-height:54px;text-align:right">0</div>
<div class="c n" style="left:1586px;top:437px;width:91px;height:54px;line-height:54px;text-align:right">0</div>
<div class="c n" style="left:1677px;top:437px;width:104px;height:54px;line-height:54px;text-align:right">0</div>
<div class="c n" style="left:1972px;top:437px;width:102px;height:54px;line-height:54px;text-align:right">0</div>
<div class="c n" style="left:2074px;top:437px;width:85px;height:54px;line-height:54px;text-align:right">0</div>
<div class="c n" style="left:0px;top:492px;width:50px;height:53px;line-height:53px;text-align:center">9</div>
<div class="c" style="left:50px;top:492px;width:100px;height:53px;line-height:53px;text-align:left">库存测试商品</div>
<div class="c n" style="left:150px;top:492px;width:72px;height:53px;line-height:53px;text-align:left">312</div>
<div class="c" style="left:464px;top:492px;width:72px;height:53px;line-height:53px;text-align:left">出库</div>
<div class="c num n" style="left:536px;top:493px;width:100px;height:53px;line-height:53px;text-align:right">8</div>
<div class="c n" style="left:636px;top:492px;width:65px;height:53px;line-height:53px;text-align:right">800</div>
<div class="c no" style="left:701px;top:492px;width:73px;height:53px;line-height:53px;text-align:left">已取消</div>
<div class="c" style="left:774px;top:492px;width:72px;height:53px;line-height:53px;text-align:left">未完成</div>
<div class="c" style="left:846px;top:492px;width:72px;height:53px;line-height:53px;text-align:left">默认仓库</div>
<div class="c n" style="left:918px;top:492px;width:86px;height:53px;line-height:53px;text-align:right">0</div>
<div class="c n" style="left:1004px;top:492px;width:86px;height:53px;line-height:53px;text-align:right">0</div>
<div class="c n" style="left:1348px;top:492px;width:75px;height:53px;line-height:53px;text-align:right">0</div>
<div class="c n" style="left:1423px;top:492px;width:74px;height:53px;line-height:53px;text-align:right">0</div>
<div class="c n" style="left:1497px;top:492px;width:89px;height:53px;line-height:53px;text-align:right">0</div>
<div class="c n" style="left:1586px;top:492px;width:91px;height:53px;line-height:53px;text-align:right">0</div>
<div class="c n" style="left:1677px;top:492px;width:104px;height:53px;line-height:53px;text-align:right">0</div>
<div class="c n" style="left:1972px;top:492px;width:102px;height:53px;line-height:53px;text-align:right">0</div>
<div class="c n" style="left:2074px;top:492px;width:85px;height:53px;line-height:53px;text-align:right">0</div>
<div class="c n" style="left:0px;top:546px;width:50px;height:54px;line-height:54px;text-align:center">10</div>
<div class="c" style="left:50px;top:546px;width:100px;height:54px;line-height:54px;text-align:left">库存测试商品</div>
<div class="c n" style="left:150px;top:546px;width:72px;height:54px;line-height:54px;text-align:left">311</div>
<div class="c n dt" style="left:222px;top:546px;width:154px;height:54px;line-height:54px;text-align:left">2025-08-17 12:52:32</div>
<div class="c" style="left:464px;top:546px;width:72px;height:54px;line-height:54px;text-align:left">退单入库</div>
<div class="c num n" style="left:536px;top:547px;width:100px;height:54px;line-height:54px;text-align:right">8</div>
<div class="c n" style="left:636px;top:546px;width:65px;height:54px;line-height:54px;text-align:right">800</div>
<div class="c ok" style="left:701px;top:546px;width:73px;height:54px;line-height:54px;text-align:left">已确认</div>
<div class="c ok" style="left:774px;top:546px;width:72px;height:54px;line-height:54px;text-align:left">已确认</div>
<div class="c" style="left:846px;top:546px;width:72px;height:54px;line-height:54px;text-align:left">默认仓库</div>
<div class="c n" style="left:918px;top:546px;width:86px;height:54px;line-height:54px;text-align:right">92</div>
<div class="c n" style="left:1004px;top:546px;width:86px;height:54px;line-height:54px;text-align:right">100</div>
<div class="c n" style="left:1348px;top:546px;width:75px;height:54px;line-height:54px;text-align:right">1000</div>
<div class="c n" style="left:1423px;top:546px;width:74px;height:54px;line-height:54px;text-align:right">8000</div>
<div class="c n" style="left:1497px;top:546px;width:89px;height:54px;line-height:54px;text-align:right">1000</div>
<div class="c n" style="left:1586px;top:546px;width:91px;height:54px;line-height:54px;text-align:right">1000</div>
<div class="c n" style="left:1677px;top:546px;width:104px;height:54px;line-height:54px;text-align:right">950</div>
<div class="c n" style="left:1869px;top:546px;width:103px;height:54px;line-height:54px;text-align:right">8000</div>
<div class="c n" style="left:2074px;top:546px;width:85px;height:54px;line-height:54px;text-align:right">100000</div>
<div class="c n" style="left:2159px;top:546px;width:78px;height:54px;line-height:54px;text-align:right">8000</div>
<div class="c n" style="left:0px;top:601px;width:50px;height:54px;line-height:54px;text-align:center">11</div>
<div class="c" style="left:50px;top:601px;width:100px;height:54px;line-height:54px;text-align:left">库存测试商品</div>
<div class="c n" style="left:150px;top:601px;width:72px;height:54px;line-height:54px;text-align:left">309</div>
<div class="c n dt" style="left:222px;top:601px;width:154px;height:54px;line-height:54px;text-align:left">2025-08-17 12:51:43</div>
<div class="c" style="left:464px;top:601px;width:72px;height:54px;line-height:54px;text-align:left">出库</div>
<div class="c num n" style="left:536px;top:602px;width:100px;height:54px;line-height:54px;text-align:right">8</div>
<div class="c n" style="left:636px;top:601px;width:65px;height:54px;line-height:54px;text-align:right">800</div>
<div class="c ok" style="left:701px;top:601px;width:73px;height:54px;line-height:54px;text-align:left">已确认</div>
<div class="c ok" style="left:774px;top:601px;width:72px;height:54px;line-height:54px;text-align:left">已确认</div>
<div class="c" style="left:846px;top:601px;width:72px;height:54px;line-height:54px;text-align:left">默认仓库</div>
<div class="c n" style="left:918px;top:601px;width:86px;height:54px;line-height:54px;text-align:right">100</div>
<div class="c n" style="left:1004px;top:601px;width:86px;height:54px;line-height:54px;text-align:right">92</div>
<div class="c n" style="left:1348px;top:601px;width:75px;height:54px;line-height:54px;text-align:right">1000</div>
<div class="c n" style="left:1423px;top:601px;width:74px;height:54px;line-height:54px;text-align:right">8000</div>
<div class="c n" style="left:1497px;top:601px;width:89px;height:54px;line-height:54px;text-align:right">1000</div>
<div class="c n" style="left:1586px;top:601px;width:91px;height:54px;line-height:54px;text-align:right">1000</div>
<div class="c n" style="left:1677px;top:601px;width:104px;height:54px;line-height:54px;text-align:right">950</div>
<div class="c n" style="left:1972px;top:601px;width:102px;height:54px;line-height:54px;text-align:right">8000</div>
<div class="c n" style="left:2074px;top:601px;width:85px;height:54px;line-height:54px;text-align:right">92000</div>
<div class="c n" style="left:0px;top:656px;width:50px;height:55px;line-height:55px;text-align:center">12</div>
<div class="c" style="left:50px;top:656px;width:100px;height:55px;line-height:55px;text-align:left">库存测试商品</div>
<div class="c n" style="left:150px;top:656px;width:72px;height:55px;line-height:55px;text-align:left">307</div>
<div class="c n dt" style="left:222px;top:656px;width:154px;height:55px;line-height:55px;text-align:left">2025-08-17 12:28:16</div>
<div class="c" style="left:464px;top:656px;width:72px;height:55px;line-height:55px;text-align:left">退单入库</div>
<div class="c num n" style="left:536px;top:657px;width:100px;height:55px;line-height:55px;text-align:right">8</div>
<div class="c n" style="left:636px;top:656px;width:65px;height:55px;line-height:55px;text-align:right">800</div>
<div class="c ok" style="left:701px;top:656px;width:73px;height:55px;line-height:55px;text-align:left">已确认</div>
<div class="c ok" style="left:774px;top:656px;width:72px;height:55px;line-height:55px;text-align:left">已确认</div>
<div class="c" style="left:846px;top:656px;width:72px;height:55px;line-height:55px;text-align:left">默认仓库</div>
<div class="c n" style="left:918px;top:656px;width:86px;height:55px;line-height:55px;text-align:right">92</div>
<div class="c n" style="left:1004px;top:656px;width:86px;height:55px;line-height:55px;text-align:right">100</div>
<div class="c n" style="left:1348px;top:656px;width:75px;height:55px;line-height:55px;text-align:right">1000</div>
<div class="c n" style="left:1423px;top:656px;width:74px;height:55px;line-height:55px;text-align:right">8000</div>
<div class="c n" style="left:1497px;top:656px;width:89px;height:55px;line-height:55px;text-align:right">1000</div>
<div class="c n" style="left:1586px;top:656px;width:91px;height:55px;line-height:55px;text-align:right">1000</div>
<div class="c n" style="left:1677px;top:656px;width:104px;height:55px;line-height:55px;text-align:right">950</div>
<div class="c n" style="left:1869px;top:656px;width:103px;height:55px;line-height:55px;text-align:right">8000</div>
<div class="c n" style="left:2074px;top:656px;width:85px;height:55px;line-height:55px;text-align:right">100000</div>
<div class="c n" style="left:2159px;top:656px;width:78px;height:55px;line-height:55px;text-align:right">8000</div>
<div class="c n" style="left:0px;top:712px;width:50px;height:54px;line-height:54px;text-align:center">13</div>
<div class="c" style="left:50px;top:712px;width:100px;height:54px;line-height:54px;text-align:left">库存测试商品</div>
<div class="c n" style="left:150px;top:712px;width:72px;height:54px;line-height:54px;text-align:left">303</div>
<div class="c n dt" style="left:222px;top:712px;width:154px;height:54px;line-height:54px;text-align:left">2025-07-30 03:05:58</div>
<div class="c" style="left:464px;top:712px;width:72px;height:54px;line-height:54px;text-align:left">出库</div>
<div class="c num n" style="left:536px;top:713px;width:100px;height:54px;line-height:54px;text-align:right">8</div>
<div class="c n" style="left:636px;top:712px;width:65px;height:54px;line-height:54px;text-align:right">800</div>
<div class="c ok" style="left:701px;top:712px;width:73px;height:54px;line-height:54px;text-align:left">已确认</div>
<div class="c ok" style="left:774px;top:712px;width:72px;height:54px;line-height:54px;text-align:left">已确认</div>
<div class="c" style="left:846px;top:712px;width:72px;height:54px;line-height:54px;text-align:left">默认仓库</div>
<div class="c n" style="left:918px;top:712px;width:86px;height:54px;line-height:54px;text-align:right">100</div>
<div class="c n" style="left:1004px;top:712px;width:86px;height:54px;line-height:54px;text-align:right">92</div>
<div class="c n" style="left:1348px;top:712px;width:75px;height:54px;line-height:54px;text-align:right">1000</div>
<div class="c n" style="left:1423px;top:712px;width:74px;height:54px;line-height:54px;text-align:right">8000</div>
<div class="c n" style="left:1497px;top:712px;width:89px;height:54px;line-height:54px;text-align:right">1000</div>
<div class="c n" style="left:1586px;top:712px;width:91px;height:54px;line-height:54px;text-align:right">1000</div>
<div class="c n" style="left:1677px;top:712px;width:104px;height:54px;line-height:54px;text-align:right">1000</div>
<div class="c n" style="left:1972px;top:712px;width:102px;height:54px;line-height:54px;text-align:right">8000</div>
<div class="c n" style="left:2074px;top:712px;width:85px;height:54px;line-height:54px;text-align:right">92000</div>
<div class="c n" style="left:0px;top:767px;width:50px;height:54px;line-height:54px;text-align:center">14</div>
<div class="c" style="left:50px;top:767px;width:100px;height:54px;line-height:54px;text-align:left">库存测试商品</div>
<div class="c n" style="left:150px;top:767px;width:72px;height:54px;line-height:54px;text-align:left">301</div>
<div class="c n dt" style="left:222px;top:767px;width:154px;height:54px;line-height:54px;text-align:left">2025-07-29 16:29:41</div>
<div class="c" style="left:464px;top:767px;width:72px;height:54px;line-height:54px;text-align:left">盘点</div>
<div class="c num n" style="left:536px;top:768px;width:100px;height:54px;line-height:54px;text-align:right">100</div>
<div class="c n" style="left:636px;top:767px;width:65px;height:54px;line-height:54px;text-align:right">100000</div>
<div class="c ok" style="left:701px;top:767px;width:73px;height:54px;line-height:54px;text-align:left">已确认</div>
<div class="c ok" style="left:774px;top:767px;width:72px;height:54px;line-height:54px;text-align:left">已确认</div>
<div class="c" style="left:846px;top:767px;width:72px;height:54px;line-height:54px;text-align:left">默认仓库</div>
<div class="c n" style="left:918px;top:767px;width:86px;height:54px;line-height:54px;text-align:right">95</div>
<div class="c n" style="left:1004px;top:767px;width:86px;height:54px;line-height:54px;text-align:right">100</div>
<div class="c n" style="left:1348px;top:767px;width:75px;height:54px;line-height:54px;text-align:right">1000</div>
<div class="c n" style="left:1497px;top:767px;width:89px;height:54px;line-height:54px;text-align:right">1000</div>
<div class="c n" style="left:1586px;top:767px;width:91px;height:54px;line-height:54px;text-align:right">1000</div>
<div class="c n" style="left:1677px;top:767px;width:104px;height:54px;line-height:54px;text-align:right">1000</div>
<div class="c n" style="left:1781px;top:767px;width:44px;height:54px;line-height:54px;text-align:right">5</div>
<div class="c n" style="left:1869px;top:767px;width:103px;height:54px;line-height:54px;text-align:right">5000</div>
<div class="c n" style="left:2074px;top:767px;width:85px;height:54px;line-height:54px;text-align:right">100000</div>
<div class="c n" style="left:2159px;top:767px;width:78px;height:54px;line-height:54px;text-align:right">5000</div>
<div class="c n" style="left:0px;top:822px;width:50px;height:54px;line-height:54px;text-align:center">15</div>
<div class="c" style="left:50px;top:822px;width:100px;height:54px;line-height:54px;text-align:left">库存测试商品</div>
<div class="c n" style="left:150px;top:822px;width:72px;height:54px;line-height:54px;text-align:left">299</div>
<div class="c n dt" style="left:222px;top:822px;width:154px;height:54px;line-height:54px;text-align:left">2025-07-29 16:25:20</div>
<div class="c" style="left:464px;top:822px;width:72px;height:54px;line-height:54px;text-align:left">盘点</div>
<div class="c num n" style="left:536px;top:823px;width:100px;height:54px;line-height:54px;text-align:right">95</div>
<div class="c n" style="left:636px;top:822px;width:65px;height:54px;line-height:54px;text-align:right">7600</div>
<div class="c ok" style="left:701px;top:822px;width:73px;height:54px;line-height:54px;text-align:left">已确认</div>
<div class="c ok" style="left:774px;top:822px;width:72px;height:54px;line-height:54px;text-align:left">已确认</div>
<div class="c" style="left:846px;top:822px;width:72px;height:54px;line-height:54px;text-align:left">默认仓库</div>
<div class="c n" style="left:918px;top:822px;width:86px;height:54px;line-height:54px;text-align:right">100</div>
<div class="c n" style="left:1004px;top:822px;width:86px;height:54px;line-height:54px;text-align:right">95</div>
<div class="c n" style="left:1348px;top:822px;width:75px;height:54px;line-height:54px;text-align:right">1000</div>
<div class="c n" style="left:1497px;top:822px;width:89px;height:54px;line-height:54px;text-align:right">1000</div>
<div class="c n" style="left:1586px;top:822px;width:91px;height:54px;line-height:54px;text-align:right">1000</div>
<div class="c n" style="left:1677px;top:822px;width:104px;height:54px;line-height:54px;text-align:right">1000</div>
<div class="c n" style="left:1825px;top:822px;width:44px;height:54px;line-height:54px;text-align:right">5</div>
<div class="c n" style="left:1972px;top:822px;width:102px;height:54px;line-height:54px;text-align:right">5000</div>
<div class="c n" style="left:2074px;top:822px;width:85px;height:54px;line-height:54px;text-align:right">95000</div>
<div class="c n" style="left:0px;top:877px;width:50px;height:55px;line-height:55px;text-align:center">16</div>
<div class="c" style="left:50px;top:877px;width:100px;height:55px;line-height:55px;text-align:left">库存测试商品</div>
<div class="c n" style="left:150px;top:877px;width:72px;height:55px;line-height:55px;text-align:left">297</div>
<div class="c n dt" style="left:222px;top:877px;width:154px;height:55px;line-height:55px;text-align:left">2025-07-29 16:24:29</div>
<div class="c" style="left:464px;top:877px;width:72px;height:55px;line-height:55px;text-align:left">撤消调拨</div>
<div class="c num n" style="left:536px;top:878px;width:100px;height:55px;line-height:55px;text-align:right">5</div>
<div class="c n" style="left:636px;top:877px;width:65px;height:55px;line-height:55px;text-align:right">400</div>
<div class="c ok" style="left:701px;top:877px;width:73px;height:55px;line-height:55px;text-align:left">已确认</div>
<div class="c ok" style="left:774px;top:877px;width:72px;height:55px;line-height:55px;text-align:left">已确认</div>
<div class="c" style="left:846px;top:877px;width:72px;height:55px;line-height:55px;text-align:left">默认仓库</div>
<div class="c n" style="left:918px;top:877px;width:86px;height:55px;line-height:55px;text-align:right">95</div>
<div class="c n" style="left:1004px;top:877px;width:86px;height:55px;line-height:55px;text-align:right">100</div>
<div class="c n" style="left:1090px;top:877px;width:86px;height:55px;line-height:55px;text-align:left">test</div>
<div class="c n" style="left:1176px;top:877px;width:86px;height:55px;line-height:55px;text-align:right">5</div>
<div class="c n" style="left:1262px;top:877px;width:86px;height:55px;line-height:55px;text-align:right">0</div>
<div class="c n" style="left:1348px;top:877px;width:75px;height:55px;line-height:55px;text-align:right">1000</div>
<div class="c n" style="left:1423px;top:877px;width:74px;height:55px;line-height:55px;text-align:right">5000</div>
<div class="c n" style="left:1497px;top:877px;width:89px;height:55px;line-height:55px;text-align:right">1000</div>
<div class="c n" style="left:1586px;top:877px;width:91px;height:55px;line-height:55px;text-align:right">1000</div>
<div class="c n" style="left:1677px;top:877px;width:104px;height:55px;line-height:55px;text-align:right">1000</div>
<div class="c n" style="left:1869px;top:877px;width:103px;height:55px;line-height:55px;text-align:right">5000</div>
<div class="c n" style="left:1972px;top:877px;width:102px;height:55px;line-height:55px;text-align:right">5000</div>
<div class="c n" style="left:2074px;top:877px;width:85px;height:55px;line-height:55px;text-align:right">100000</div>
<div class="c n" style="left:2159px;top:877px;width:78px;height:55px;line-height:55px;text-align:right">5000</div>
<div class="c n" style="left:0px;top:933px;width:50px;height:53px;line-height:53px;text-align:center">17</div>
<div class="c" style="left:50px;top:933px;width:100px;height:53px;line-height:53px;text-align:left">库存测试商品</div>
<div class="c n" style="left:150px;top:933px;width:72px;height:53px;line-height:53px;text-align:left">295</div>
<div class="c n dt" style="left:222px;top:933px;width:154px;height:53px;line-height:53px;text-align:left">2025-07-29 16:23:38</div>
<div class="c" style="left:464px;top:933px;width:72px;height:53px;line-height:53px;text-align:left">调拨</div>
<div class="c num n" style="left:536px;top:934px;width:100px;height:53px;line-height:53px;text-align:right">5</div>
<div class="c n" style="left:636px;top:933px;width:65px;height:53px;line-height:53px;text-align:right">400</div>
<div class="c no" style="left:701px;top:933px;width:73px;height:53px;line-height:53px;text-align:left">已取消</div>
<div class="c ok" style="left:774px;top:933px;width:72px;height:53px;line-height:53px;text-align:left">已确认</div>
<div class="c" style="left:846px;top:933px;width:72px;height:53px;line-height:53px;text-align:left">默认仓库</div>
<div class="c n" style="left:918px;top:933px;width:86px;height:53px;line-height:53px;text-align:right">100</div>
<div class="c n" style="left:1004px;top:933px;width:86px;height:53px;line-height:53px;text-align:right">95</div>
<div class="c n" style="left:1090px;top:933px;width:86px;height:53px;line-height:53px;text-align:left">test</div>
<div class="c n" style="left:1176px;top:933px;width:86px;height:53px;line-height:53px;text-align:right">0</div>
<div class="c n" style="left:1262px;top:933px;width:86px;height:53px;line-height:53px;text-align:right">5</div>
<div class="c n" style="left:1348px;top:933px;width:75px;height:53px;line-height:53px;text-align:right">1000</div>
<div class="c n" style="left:1423px;top:933px;width:74px;height:53px;line-height:53px;text-align:right">5000</div>
<div class="c n" style="left:1497px;top:933px;width:89px;height:53px;line-height:53px;text-align:right">1000</div>
<div class="c n" style="left:1586px;top:933px;width:91px;height:53px;line-height:53px;text-align:right">1000</div>
<div class="c n" style="left:1677px;top:933px;width:104px;height:53px;line-height:53px;text-align:right">1000</div>
<div class="c n" style="left:1869px;top:933px;width:103px;height:53px;line-height:53px;text-align:right">5000</div>
<div class="c n" style="left:1972px;top:933px;width:102px;height:53px;line-height:53px;text-align:right">5000</div>
<div class="c n" style="left:2074px;top:933px;width:85px;height:53px;line-height:53px;text-align:right">95000</div>
<div class="c n" style="left:2159px;top:933px;width:78px;height:53px;line-height:53px;text-align:right">5000</div>
<div class="c n" style="left:0px;top:987px;width:50px;height:54px;line-height:54px;text-align:center">18</div>
<div class="c" style="left:50px;top:987px;width:100px;height:54px;line-height:54px;text-align:left">库存测试商品</div>
<div class="c n" style="left:150px;top:987px;width:72px;height:54px;line-height:54px;text-align:left">293</div>
<div class="c n dt" style="left:222px;top:987px;width:154px;height:54px;line-height:54px;text-align:left">2025-07-29 15:53:24</div>
<div class="c" style="left:464px;top:987px;width:72px;height:54px;line-height:54px;text-align:left">退单入库</div>
<div class="c num n" style="left:536px;top:988px;width:100px;height:54px;line-height:54px;text-align:right">8</div>
<div class="c n" style="left:636px;top:987px;width:65px;height:54px;line-height:54px;text-align:right">800</div>
<div class="c ok" style="left:701px;top:987px;width:73px;height:54px;line-height:54px;text-align:left">已确认</div>
<div class="c ok" style="left:774px;top:987px;width:72px;height:54px;line-height:54px;text-align:left">已确认</div>
<div class="c" style="left:846px;top:987px;width:72px;height:54px;line-height:54px;text-align:left">默认仓库</div>
<div class="c n" style="left:918px;top:987px;width:86px;height:54px;line-height:54px;text-align:right">92</div>
<div class="c n" style="left:1004px;top:987px;width:86px;height:54px;line-height:54px;text-align:right">100</div>
<div class="c n" style="left:1348px;top:987px;width:75px;height:54px;line-height:54px;text-align:right">1000</div>
<div class="c n" style="left:1423px;top:987px;width:74px;height:54px;line-height:54px;text-align:right">8000</div>
<div class="c n" style="left:1497px;top:987px;width:89px;height:54px;line-height:54px;text-align:right">1026.522</div>
<div class="c n" style="left:1586px;top:987px;width:91px;height:54px;line-height:54px;text-align:right">1000</div>
<div class="c n" style="left:1677px;top:987px;width:104px;height:54px;line-height:54px;text-align:right">1000</div>
<div class="c n" style="left:1869px;top:987px;width:103px;height:54px;line-height:54px;text-align:right">8000</div>
<div class="c n" style="left:2074px;top:987px;width:85px;height:54px;line-height:54px;text-align:right">100000</div>
<div class="c n" style="left:2159px;top:987px;width:78px;height:54px;line-height:54px;text-align:right">8212.174</div>
<div class="c n" style="left:0px;top:1042px;width:50px;height:54px;line-height:54px;text-align:center">19</div>
<div class="c" style="left:50px;top:1042px;width:100px;height:54px;line-height:54px;text-align:left">库存测试商品</div>
<div class="c n" style="left:150px;top:1042px;width:72px;height:54px;line-height:54px;text-align:left">291</div>
<div class="c n dt" style="left:222px;top:1042px;width:154px;height:54px;line-height:54px;text-align:left">2025-07-29 15:52:53</div>
<div class="c" style="left:464px;top:1042px;width:72px;height:54px;line-height:54px;text-align:left">撤消入库</div>
<div class="c num n" style="left:536px;top:1043px;width:100px;height:54px;line-height:54px;text-align:right">50</div>
<div class="c n" style="left:636px;top:1042px;width:65px;height:54px;line-height:54px;text-align:right">4250</div>
<div class="c ok" style="left:701px;top:1042px;width:73px;height:54px;line-height:54px;text-align:left">已确认</div>
<div class="c ok" style="left:774px;top:1042px;width:72px;height:54px;line-height:54px;text-align:left">已确认</div>
<div class="c" style="left:846px;top:1042px;width:72px;height:54px;line-height:54px;text-align:left">默认仓库</div>
<div class="c n" style="left:918px;top:1042px;width:86px;height:54px;line-height:54px;text-align:right">142</div>
<div class="c n" style="left:1004px;top:1042px;width:86px;height:54px;line-height:54px;text-align:right">92</div>
<div class="c n" style="left:1348px;top:1042px;width:75px;height:54px;line-height:54px;text-align:right">1000</div>
<div class="c n" style="left:1423px;top:1042px;width:74px;height:54px;line-height:54px;text-align:right">50000</div>
<div class="c n" style="left:1497px;top:1042px;width:89px;height:54px;line-height:54px;text-align:right">695</div>
<div class="c n" style="left:1586px;top:1042px;width:91px;height:54px;line-height:54px;text-align:right">1026.522</div>
<div class="c n" style="left:1677px;top:1042px;width:104px;height:54px;line-height:54px;text-align:right">1000</div>
<div class="c n" style="left:1972px;top:1042px;width:102px;height:54px;line-height:54px;text-align:right">50000</div>
<div class="c n" style="left:2074px;top:1042px;width:85px;height:54px;line-height:54px;text-align:right">92000</div>
</div>
<div class="a red" style="top:130px">商品库存从：入库、出库到调拨、盘点，笔笔明细清晰可查。</div>
<div class="a red" style="top:162px">月度加权平均成本、移动平均成本、<span style="letter-spacing:-1.6px">FIFO</span>先进先出成本核心算算法，同时显示，</div>
<div class="a red" style="top:194px">方便财务人员比较不同成本核算算法，对企业的成本和利润影响。</div>
<div class="a" style="left:256px;top:1301px;width:1687px;height:12px;background:#c9c9c9"></div>
</body></html>
